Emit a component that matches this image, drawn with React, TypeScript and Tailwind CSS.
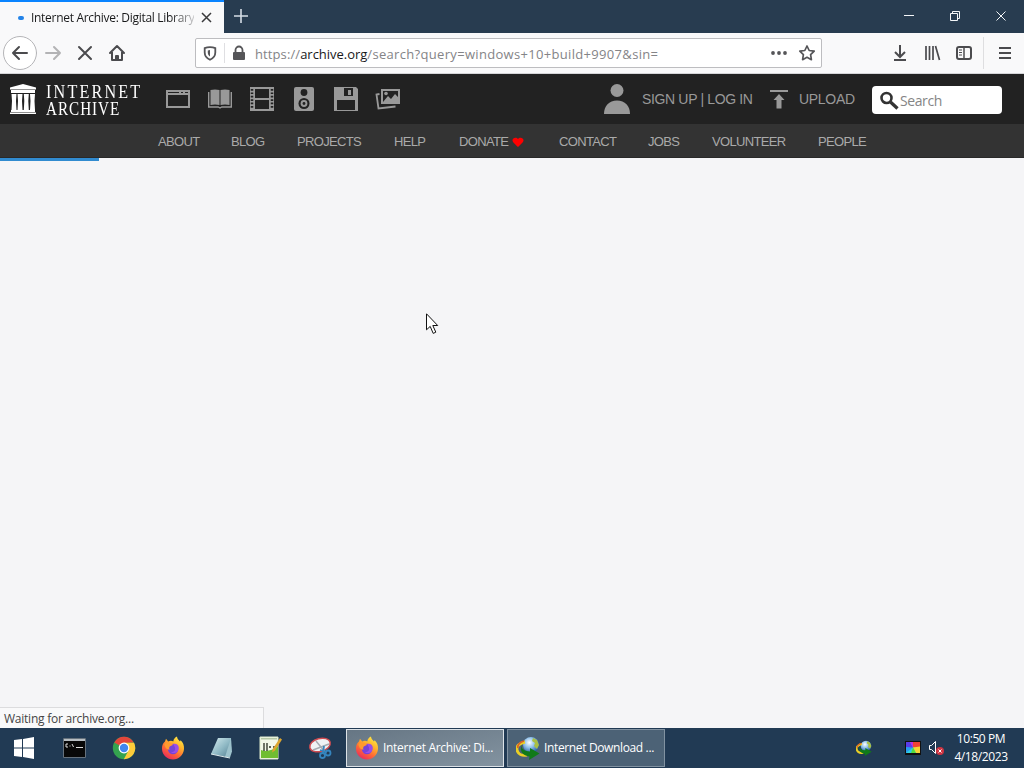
import React from "react";

const navLinks = [
  { label: "ABOUT", width: "w-[40px]" },
  { label: "BLOG", width: "w-[33px]" },
  { label: "PROJECTS", width: "w-[64px]" },
  { label: "HELP", width: "w-[32px]" },
  { label: "DONATE", width: "w-[67px]", heart: true },
  { label: "CONTACT", width: "w-[56px]" },
  { label: "JOBS", width: "w-[31px]" },
  { label: "VOLUNTEER", width: "w-[73px]" },
  { label: "PEOPLE", width: "w-[48px]" },
];

const Firefox = () => (
  <svg width="24" height="24" viewBox="0 0 24 24" className="shrink-0">
    <defs>
      <linearGradient id="fox" x1="0.85" y1="0" x2="0.25" y2="1">
        <stop offset="0" stopColor="#fff04a" />
        <stop offset="0.35" stopColor="#ffb52b" />
        <stop offset="0.65" stopColor="#ff6a35" />
        <stop offset="1" stopColor="#e8265f" />
      </linearGradient>
    </defs>
    <path
      d="M4 5.5 5 2.8 7.2 5.4C9 4.5 11 4.6 12.3 5.4 12.5 3.2 14 1.2 16 .5c.1 2.4 1.5 3.3 3 5l.6-1.2C22 6.500 23.300 9.500 23 13c-.5 6-5.300 10.500-11 10.500S1.200 19 1 13c-.1-3 .7-5.600 3-7.500Z"
      fill="url(#fox)"
    />
    <circle cx="12" cy="13" r="5.200" fill="#7543d8" />
    <path d="M3.500 8c2.500-2 6-1.700 8.700.8l-3 1.400c-1 .5-1.400 2-.6 3.500-2.800 0-5-2.200-5.100-5.700Z" fill="#ff9a2e" />
    <path d="M12 8c4-1.500 7 2 5.300 6.200-1 2.800-5 3.800-7.600 2 4.300.4 6.300-3.200 2.300-8.200Z" fill="#9a4ee6" />
  </svg>
);

const Chrome = () => (
  <svg width="24" height="24" viewBox="0 0 24 24">
    <circle cx="12" cy="12" r="11.200" fill="#34a34f" />
    <path d="M12 12 2.300 6.400A11.200 11.200 0 0 1 21.700 6.400L12 7Z" fill="#e2463b" />
    <path d="M12 6.800h10a11.200 11.200 0 0 1-10.200 16.400l4.700-8.700Z" fill="#fdcb3a" />
    <circle cx="12" cy="12" r="5.400" fill="#fff" />
    <circle cx="12" cy="12" r="4.200" fill="#4087ee" />
  </svg>
);

const Globe = ({ small = false }: { small?: boolean }) => (
  <svg width={small ? 16 : 24} height={small ? 16 : 24} viewBox="0 0 24 24" className="shrink-0">
    <defs>
      <radialGradient id="globe" cx=".4" cy=".35" r=".65">
        <stop offset="0" stopColor="#fff" />
        <stop offset=".5" stopColor="#8fc0ea" />
        <stop offset="1" stopColor="#2a62a6" />
      </radialGradient>
    </defs>
    <circle cx="15" cy="9" r="8" fill="url(#globe)" />
    <path d="m17 2 4 2 2 5-2 4-3-3 1-3-3-2Z" fill="#a9c043" />
    <path d="M9 6C4 7 0 10 1 14s5 6 10 5" fill="none" stroke="#e9cf25" strokeWidth="3" />
    <path d="M8 5C4 6 1 9 2 12" fill="none" stroke="#dd6227" strokeWidth="1.800" />
    <path d="M6 9c-1 4 2 6 8 6.500V12l9.500 5.500L13 24l.5-3.500C7 20 3 15 6 9Z" fill="#107a19" />
  </svg>
);

const App = () => {
  return (
    <div className="relative flex h-[768px] w-[1024px] flex-col overflow-hidden bg-[#f5f5f7] font-['Open_Sans',sans-serif]">
      {/* Tab strip */}
      <div className="flex h-[33px] shrink-0 bg-[#283c50]">
        <div className="flex w-[224px] items-center border-t-2 border-[#0a84ff] bg-[#f9f9fa] pl-[18px]">
          <div className="mr-[7px] h-1 w-[6px] rounded-full bg-[#2383e8]" />
          <div className="w-[163px] overflow-hidden whitespace-nowrap bg-gradient-to-r from-[#18191a] from-85% to-[#c8c8ca] bg-clip-text text-xs tracking-[-0.3px] text-transparent">
            Internet Archive: Digital Library
          </div>
          <svg className="mb-0.5" width="24" height="24" viewBox="0 0 24 24" fill="none" stroke="#39393b" strokeWidth="1.500">
            <path d="m8 8 9 9m0-9-9 9" />
          </svg>
        </div>
        <svg width="34" height="33" viewBox="0 0 34 33" stroke="#d5dde5" strokeWidth="1.600">
          <path d="M10 16h14M17 9v14" />
        </svg>
        <svg className="ml-auto" width="138" height="33" viewBox="0 0 138 33" fill="none" stroke="#f4f6f8">
          <path d="M18 15.500h10M64.500 13.500h7v7h-7zM66.500 13.500v-2h7v7h-2M110.500 11.500l9 9m0-9-9 9" />
        </svg>
      </div>

      {/* Toolbar */}
      <div className="flex h-[41px] shrink-0 items-center border-b border-[#d5d5d8] bg-[#f9f9fa]">
        <svg width="135" height="40" viewBox="0 0 135 40" fill="none" stroke="#4b4b4e" strokeWidth="2" strokeLinecap="round" strokeLinejoin="round">
          <circle cx="20" cy="20" r="16.500" fill="#fff" stroke="#b5b5b8" strokeWidth="1" />
          <path d="M27 20H13m6-6-6 6 6 6" />
          <path d="M46 20h14m-6-6 6 6-6 6" stroke="#b3b3b5" />
          <path d="m79 14 12 12m0-12L79 26" />
          <path d="m110 20 7-7 7 7M112 19v8h10v-8M116 27v-4h2v4" />
        </svg>
        <div className="ml-[60px] flex h-[30px] w-[627px] items-center rounded-xs border border-[#bdbdc0] bg-white">
          <svg className="shrink-0" width="59" height="28" viewBox="0 0 59 28" fill="none" stroke="#555558" strokeWidth="1.800">
            <path d="M14 8.200c2.300 0 3.900.4 5.300 1v4.300c0 3.700-2.200 5.900-5.300 7.300-3.100-1.400-5.300-3.600-5.300-7.300V9.200c1.400-.6 3-1 5.300-1Z" />
            <path d="M14 11v6.600c-1.500-1.100-2.200-2.500-2.200-4.100v-2Z" fill="#555558" stroke="none" />
            <path d="M28.500 4v20" stroke="#dfdfe2" strokeWidth="1" />
            <rect x="37" y="13" width="12" height="8" rx="1" fill="#555558" stroke="none" />
            <path d="M39.500 13v-2a3.500 3.500 0 0 1 7 0v2" />
          </svg>
          <div className="pt-[3px] whitespace-nowrap text-[13px] tracking-[0.32px] text-[#848487]">
            <span className="tracking-[0.1px]">https://</span>
            <span className="tracking-[-0.02px] text-[#18181a]">archive.org</span>/search?query=windows+10+build+9907&amp;sin=
          </div>
          <svg className="ml-auto shrink-0" width="53" height="28" viewBox="0 0 53 28" fill="none" stroke="#555558" strokeWidth="1.700">
            <g fill="#555558" stroke="none">
              <circle cx="5" cy="14" r="1.900" />
              <circle cx="11" cy="14" r="1.900" />
              <circle cx="17" cy="14" r="1.900" />
            </g>
            <path d="m39 7 2.200 4.500 5 .7-3.600 3.500.8 5-4.400-2.400-4.400 2.400.8-5-3.600-3.500 5-.7Z" strokeLinejoin="round" />
          </svg>
        </div>
        <svg className="ml-auto" width="144" height="40" viewBox="0 0 144 40" fill="none" stroke="#4b4b4e" strokeWidth="2">
          <path d="M20 12v12m-5-5 5 5 5-5M14 27h12" />
          <path d="M46 13v14M49.500 13v14M53 13v14M55.500 13l4 14" strokeWidth="1.700" />
          <rect x="77" y="14" width="14" height="12" rx="2" />
          <path d="M84 14v12" strokeWidth="1.500" />
          <path d="M79 17h3m-3 2.500h3m-3 2.500h3" strokeWidth="1" />
          <path d="M103.500 4v32" stroke="#dedee0" strokeWidth="1" />
          <path d="M119 15h12m-12 5h12m-12 5h12" />
        </svg>
      </div>

      {/* Internet Archive header */}
      <header className="flex h-[50px] shrink-0 items-center bg-[#222] font-['Liberation_Sans',sans-serif] text-[#999]">
        <svg className="ml-[9px]" width="28" height="32" viewBox="0 0 28 32" fill="#fff">
          <path d="M14 1 27 4.500v2H1v-2ZM2 7h24v3H2ZM2 27h24v2H2ZM1 29.500h26V31H1Z" />
          <path d="M2.500 11h5L7 18l.5 9h-5l.5-9ZM8.500 11h5l-.5 7 .5 9h-5l.5-9ZM14.800 11h5l-.5 7 .5 9h-5l.5-9ZM21 11h5l-.5 7 .5 9h-5l.5-9Z" />
        </svg>
        <div className="ml-[9px] w-[120px] pt-0.5 whitespace-nowrap font-['Liberation_Serif',serif] text-[19px] leading-[17px] text-white">
          <div className="h-[17px] origin-left scale-x-[0.85] tracking-[2.550px]">INTERNET</div>
          <div className="h-[17px] origin-left scale-x-[0.8] tracking-[1.200px]">ARCHIVE</div>
        </div>
        <svg width="236" height="32" viewBox="0 0 236 32" fill="#999">
          <path d="M0 7h24v18H0Zm2 5v11h20V12Zm0-3v1h11V9Zm13 0v1h2V9Zm4 0v1h3V9Z" fillRule="evenodd" />
          <path d="M44.500 7q4.500-1 9 0v15q-4.500-1-9 0ZM54.500 7q4.500-1 9 0v15q-4.500-1-9 0Z" />
          <path d="M42.700 9v15h9.500l1.800 1 1.800-1h9.500V9" fill="none" stroke="#999" strokeWidth="1.400" />
          <path d="M84 4h24v24H84Zm5 2v9h14V6Zm0 11v9h14v-9Z" fillRule="evenodd" />
          <path d="M86 6v20M106 6v20" stroke="#222" strokeWidth="2.500" strokeDasharray="1.700 1.700" />
          <rect x="128" y="4" width="20" height="24" rx="2" />
          <circle cx="138" cy="9.500" r="3.400" fill="#222" />
          <circle cx="138" cy="20.500" r="5.500" fill="#222" />
          <circle cx="138" cy="20.500" r="3.400" fill="#999" />
          <circle cx="138" cy="20.500" r="1.400" fill="#222" />
          <path d="M168 4h22l2 2v22h-24Zm5 1v8h14V5Zm-2 12v10h18V17Z" fillRule="evenodd" />
          <path d="M173 5h8v8h-8Z" fill="#999" />
          <path d="M178 5h9v8h-9Z" fill="#222" />
          <path d="M182 7h3v5h-3Z" />
          <path d="M215 6h19v15h-19Zm2 2v11l5-6 3 3 4-5 3 3V8Z" fillRule="evenodd" />
          <circle cx="220" cy="10.500" r="1.800" />
          <path d="m213.500 11-3 .5 2 14 17-2" fill="none" stroke="#999" strokeWidth="1.800" />
        </svg>
        <svg className="ml-[202px]" width="26" height="32" viewBox="0 0 26 32" fill="#999">
          <circle cx="13" cy="7.500" r="6.500" />
          <path d="M0 31c0-8 5-13.500 13-13.500S26 23 26 31Z" />
        </svg>
        <span className="ml-3 w-[127px] whitespace-nowrap text-sm tracking-[-0.35px]">SIGN UP | LOG IN</span>
        <svg width="20" height="20" viewBox="0 0 20 20" fill="#999">
          <path d="M1 1h18v2H1ZM10 5l5.500 6h-3v8.500h-5V11h-3Z" />
        </svg>
        <span className="ml-2.5 w-[73px] text-sm tracking-[-0.3px]">UPLOAD</span>
        <div className="mt-0.5 flex h-7 w-[130px] items-center rounded bg-white pl-2 font-['Open_Sans',sans-serif] text-sm tracking-[-0.4px] text-[#858585]">
          <svg width="20" height="20" viewBox="0 0 20 20" fill="none" stroke="#333">
            <circle cx="6.500" cy="8" r="5" strokeWidth="2.600" />
            <path d="m10.500 12 7 6.500" strokeWidth="3.300" />
          </svg>
          <span className="pt-0.5">Search</span>
        </div>
      </header>

      <nav className="flex h-[34px] shrink-0 items-center gap-[33px] border-b border-[#292929] bg-[#333] pt-0.5 pl-[158px] font-['Liberation_Sans',sans-serif] text-[13px] tracking-[-0.65px] text-[#aaa]">
        {navLinks.map((link) => (
          <span key={link.label} className={`flex shrink-0 items-center whitespace-nowrap ${link.width}`}>
            {link.label}
            {link.heart && (
              <svg className="ml-1" width="12" height="10" viewBox="0 0 12 10" fill="#f00">
                <path d="M6 10C3 7 .5 5.500.5 3.300.5.700 4.500 0 6 2 7.500 0 11.500.700 11.500 3.300 11.500 5.500 9 7 6 10Z" />
              </svg>
            )}
          </span>
        ))}
      </nav>

      {/* Page is still loading */}
      <main className="flex grow flex-col justify-between bg-[#f5f5f7]">
        <div className="h-[3px] w-[99px] bg-[#318bd0]" />
        <div className="h-[21px] w-[264px] border-t border-r border-[#dcdcde] bg-[#f9f9fa] pl-1 text-xs leading-[22px] tracking-[-0.24px] text-[#444]">
          Waiting for archive.org...
        </div>
      </main>

      {/* Taskbar */}
      <footer className="flex h-10 shrink-0 items-center bg-[#213a54] text-xs text-white">
        <div className="flex w-[346px] items-center">
          <svg className="ml-[13px]" width="23" height="24" viewBox="0 0 23 24" fill="#fff">
            <path d="m1 4 8-1v8.500H1Zm9-1 11-2v10.500H10ZM1 12.500h8V21l-8-1Zm9 0h11V23l-11-2Z" />
          </svg>
          <svg className="ml-[27px]" width="23" height="20" viewBox="0 0 23 20">
            <path d="M.5.5h22v19H.5Z" fill="#080808" stroke="#65717c" />
            <path d="M1 1h21v2H1Z" fill="#b8bec2" />
            <path d="M5 6H3v3h2m2-2v.5m0 1V9m2-3 1.500 3M13 9.500h7" stroke="#ddd" fill="none" />
          </svg>
          <div className="ml-[26px]"><Chrome /></div>
          <div className="ml-[25px]"><Firefox /></div>
          <svg className="ml-[24px]" width="24" height="24" viewBox="0 0 24 24">
            <defs>
              <linearGradient id="note" x2="1" y2="1">
                <stop stopColor="#d7edf0" />
                <stop offset=".55" stopColor="#8eb8c4" />
                <stop offset="1" stopColor="#547f92" />
              </linearGradient>
            </defs>
            <path d="M9 2h13v14l-3 5-17-3Z" fill="url(#note)" />
            <path d="m22 2-6 19 5 .5 2-6Z" fill="#9dc2cc" />
            <path d="m2 18 14 3 5 1" stroke="#e0ecee" fill="none" />
          </svg>
          <svg className="ml-[25px]" width="24" height="24" viewBox="0 0 24 24">
            <path d="M2 1h18v22H2Z" fill="#f3f8e9" stroke="#dce8cb" />
            <path d="M3 14q8 3 17-4v12H3Z" fill="#70bd31" />
            <path d="M3 2h16v1.500H3Z" fill="#b5c7a5" />
            <path d="M6 7v8M9 7v8M11 11h2m2 0h2" stroke="#292d22" strokeWidth="1.300" />
            <path d="m22 2 2 1.500-7 11-3 2 1-4Z" fill="#dda52e" />
          </svg>
          <svg className="ml-[26px]" width="24" height="24" viewBox="0 0 24 24">
            <ellipse cx="12" cy="9" rx="10.500" ry="6.500" fill="#f0f2f4" stroke="#cf4b50" strokeWidth="1.500" transform="rotate(-15 12 9)" />
            <path d="m5 14 16-6M8 5l9 11" stroke="#a6abb1" strokeWidth="1.500" />
            <g fill="none" stroke="#3585be" strokeWidth="1.800">
              <path d="m12 14 7 2M16 10l-1 7" />
              <circle cx="14.500" cy="19.500" r="2.500" />
              <circle cx="20" cy="17" r="2.500" />
            </g>
          </svg>
        </div>
        <div className="flex h-[38px] w-[158px] items-center border border-[#dce2e7] bg-gradient-to-br from-[#667684] to-[#8393a0] pl-2">
          <Firefox />
          <span className="ml-1 whitespace-nowrap tracking-[-0.3px]">Internet Archive: Di...</span>
        </div>
        <div className="ml-[3px] flex h-[38px] w-[158px] items-center border border-[#8192a1] bg-[#4c6276] pl-[8px]">
          <Globe />
          <span className="ml-1 whitespace-nowrap tracking-[-0.36px]">Internet Download ...</span>
        </div>
        <div className="ml-auto flex h-full w-[168px] items-center">
          <Globe small />
          <svg className="ml-[33px]" width="16" height="14" viewBox="0 0 16 14">
            <path d="M0 0h16v14H0Z" fill="#111" />
            <path d="M1 1h14v11H1Z" fill="#2fd0e0" />
            <path d="M1 1h7v5.500L1 12Z" fill="#2a9cf0" />
            <path d="M1 1h4l3 5.500L1 6Z" fill="#5a3ce8" />
            <path d="M5 1h3v5.500Z" fill="#c22ce0" />
            <path d="M8 1h7v6L8 6.500Z" fill="#f04235" />
            <path d="m8 6.500 7-1V12h-4Z" fill="#f8d534" />
            <path d="m8 6.500 3 5.500H6Z" fill="#54dc3c" />
          </svg>
          <svg className="ml-[7px]" width="17" height="16" viewBox="0 0 17 16" fill="none">
            <path d="M1.500 5.500h2l4-4v12l-4-4h-2Z" stroke="#fff" />
            <circle cx="12" cy="11" r="4" fill="#cf3542" />
            <path d="m10.500 9.500 3 3m0-3-3 3" stroke="#fff" />
          </svg>
          <div className="ml-[7px] w-[58px] whitespace-nowrap text-center leading-[18px] tracking-[-0.4px]">
            <div>10:50 PM</div>
            <div>4/18/2023</div>
          </div>
        </div>
      </footer>

      {/* Mouse pointer */}
      <svg className="absolute top-[313px] left-[426px]" width="14" height="22" viewBox="0 0 14 22">
        <path d="M.5.800v16l3.700-3.400 3 7 2.600-1.200-3-6.700h4.900Z" fill="#fff" stroke="#111" />
      </svg>
    </div>
  );
};

export default App;
